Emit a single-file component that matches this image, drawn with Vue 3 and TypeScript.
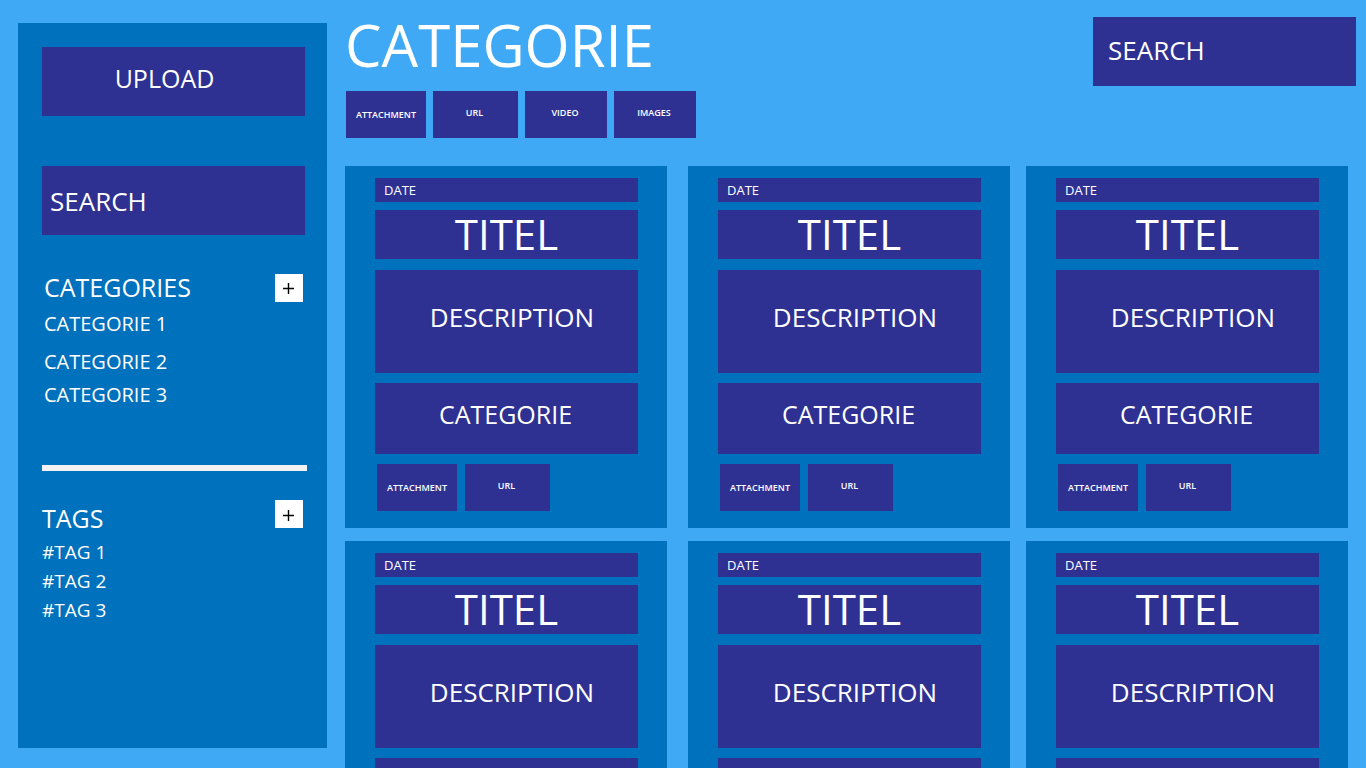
<script setup lang="ts">
import { ref } from 'vue'

interface Chip {
  label: string
  kind: string
}

const sideSearch = ref('')
const topSearch = ref('')

const filters: Chip[] = [
  { label: 'ATTACHMENT', kind: 'attachment' },
  { label: 'URL', kind: 'url' },
  { label: 'VIDEO', kind: 'media' },
  { label: 'IMAGES', kind: 'media' },
]
const cardChips = filters.slice(0, 2)

const categories = ['CATEGORIE 1', 'CATEGORIE 2', 'CATEGORIE 3']
const tags = ['#TAG 1', '#TAG 2', '#TAG 3']
const columns = [
  [1, 4],
  [2, 5],
  [3, 6],
]
</script>

<template>
  <div class="page">
    <aside class="sidebar">
      <button type="button" class="upload">UPLOAD</button>
      <input v-model="sideSearch" class="search side-search" type="text" placeholder="SEARCH" aria-label="Search items" />

      <section class="group categories">
        <header class="group-head">
          <h2>CATEGORIES</h2>
          <button type="button" class="add" aria-label="Add category">
            <svg viewBox="0 0 28 28" aria-hidden="true"><path d="M8 14.5H19M13.5 9V20" /></svg>
          </button>
        </header>
        <ul>
          <li v-for="item in categories" :key="item"><a href="#">{{ item }}</a></li>
        </ul>
      </section>

      <hr />

      <section class="group tags">
        <header class="group-head">
          <h2>TAGS</h2>
          <button type="button" class="add" aria-label="Add tag">
            <svg viewBox="0 0 28 28" aria-hidden="true"><path d="M8 15.5H19M13.5 10V21" /></svg>
          </button>
        </header>
        <ul>
          <li v-for="item in tags" :key="item"><a href="#">{{ item }}</a></li>
        </ul>
      </section>
    </aside>

    <main class="main">
      <header class="top">
        <div>
          <h1>CATEGORIE</h1>
          <nav class="filters">
            <button v-for="chip in filters" :key="chip.label" type="button" class="chip" :class="chip.kind">
              {{ chip.label }}
            </button>
          </nav>
        </div>
        <input v-model="topSearch" class="search top-search" type="text" placeholder="SEARCH" aria-label="Search this category" />
      </header>

      <div class="board">
        <div v-for="(column, index) in columns" :key="index" class="column">
          <article v-for="id in column" :key="id" class="card">
            <div class="block date">DATE</div>
            <h3 class="block title">TITEL</h3>
            <div class="block description">DESCRIPTION</div>
            <div class="block category">CATEGORIE</div>
            <div class="chips">
              <button v-for="chip in cardChips" :key="chip.label" type="button" class="chip" :class="chip.kind">
                {{ chip.label }}
              </button>
            </div>
          </article>
        </div>
      </div>
    </main>
  </div>
</template>

<style>
body {
  margin: 0;
  background: #3fa9f5;
}
</style>

<style scoped>
.page {
  display: flex;
  gap: 18px;
  height: 100vh;
  padding-left: 18px;
  box-sizing: border-box;
  background: #3fa9f5;
  color: #fff;
  font-family: "Open Sans", "Noto Sans", sans-serif;
}

.page * {
  box-sizing: border-box;
}

h1,
h2,
h3,
ul {
  margin: 0;
  padding: 0;
  font-weight: 400;
}

ul {
  list-style: none;
}

button,
input {
  border: 0;
  border-radius: 0;
  color: inherit;
  font-family: inherit;
}

.sidebar {
  flex: 0 0 309px;
  margin: 23px 0 20px;
  padding: 24px 20px 0 24px;
  background: #0071bc;
}

.upload,
.search {
  display: block;
  width: 263px;
  height: 69px;
  background: #2e3192;
}

.upload {
  padding: 0 18px 8px 0;
  font-size: 25px;
}

.search {
  outline: none;
  font-size: 26px;
}

.search::placeholder {
  color: #fff;
  opacity: 1;
}

.side-search {
  margin-top: 50px;
  padding: 1px 8px 0;
}

.top-search {
  padding: 0 15px 3px;
}

.group-head {
  display: flex;
  justify-content: space-between;
  align-items: flex-start;
  padding-right: 4px;
}

.group h2 {
  font-size: 25px;
  line-height: 26px;
}

.add {
  width: 28px;
  height: 28px;
  padding: 0;
  background: #fff;
}

.add svg {
  display: block;
  width: 28px;
  height: 28px;
  fill: none;
  stroke: #000;
  stroke-width: 1.4;
}

.group li {
  font-size: 20px;
}

.group a {
  color: inherit;
  text-decoration: none;
}

.categories {
  margin-top: 39px;
}

.categories h2,
.categories ul {
  padding-left: 2px;
}

.categories ul {
  margin-top: 5px;
}

.categories li {
  line-height: 33px;
}

.categories li:first-child {
  margin-bottom: 5px;
}

hr {
  height: 6px;
  margin: 54px 0 29px;
  border: 0;
  background: #f2f2f2;
}

.tags h2 {
  line-height: 36px;
}

.tags ul {
  margin-top: 2px;
}

.group.tags li {
  font-size: 19px;
  line-height: 29px;
}

.main {
  flex: 1;
  min-width: 0;
  padding-top: 17px;
  overflow-y: auto;
  scrollbar-width: none;
}

.top {
  display: flex;
  justify-content: space-between;
  align-items: flex-start;
  padding-right: 10px;
}

h1 {
  font-size: 58px;
  line-height: 56px;
}

.filters {
  display: flex;
  gap: 7px;
  margin-top: 18px;
  padding-left: 1px;
}

.chip {
  width: 85px;
  height: 47px;
  padding: 0 2px 4px 0;
  background: #2e3192;
  font-size: 9px;
  font-weight: 600;
}

.chip.attachment {
  width: 80px;
  padding: 0;
}

.chip.media {
  width: 82px;
}

.board {
  display: grid;
  grid-template-columns: minmax(0, 1fr) 21px minmax(0, 1fr) 16px minmax(0, 1fr);
  margin-top: 28px;
  padding-right: 18px;
}

.column {
  display: flex;
  flex-direction: column;
  gap: 13px;
}

.column:nth-child(2) {
  grid-column: 3;
}

.column:nth-child(3) {
  grid-column: 5;
}

.card {
  padding: 12px 29px 17px 30px;
  background: #0071bc;
}

.block {
  background: #2e3192;
  text-align: center;
}

.date {
  padding-left: 9px;
  font-size: 13px;
  font-weight: 500;
  line-height: 24px;
  text-align: left;
}

.title {
  margin-top: 8px;
  padding-bottom: 2px;
  font-size: 42px;
  line-height: 47px;
}

.description {
  margin-top: 11px;
  padding: 29px 0 38px 11px;
  font-size: 26px;
  line-height: 36px;
}

.category {
  margin-top: 10px;
  padding: 13px 2px 22px 0;
  font-size: 25px;
  line-height: 36px;
}

.chips {
  display: flex;
  gap: 8px;
  margin-top: 10px;
  padding-left: 2px;
}
</style>
